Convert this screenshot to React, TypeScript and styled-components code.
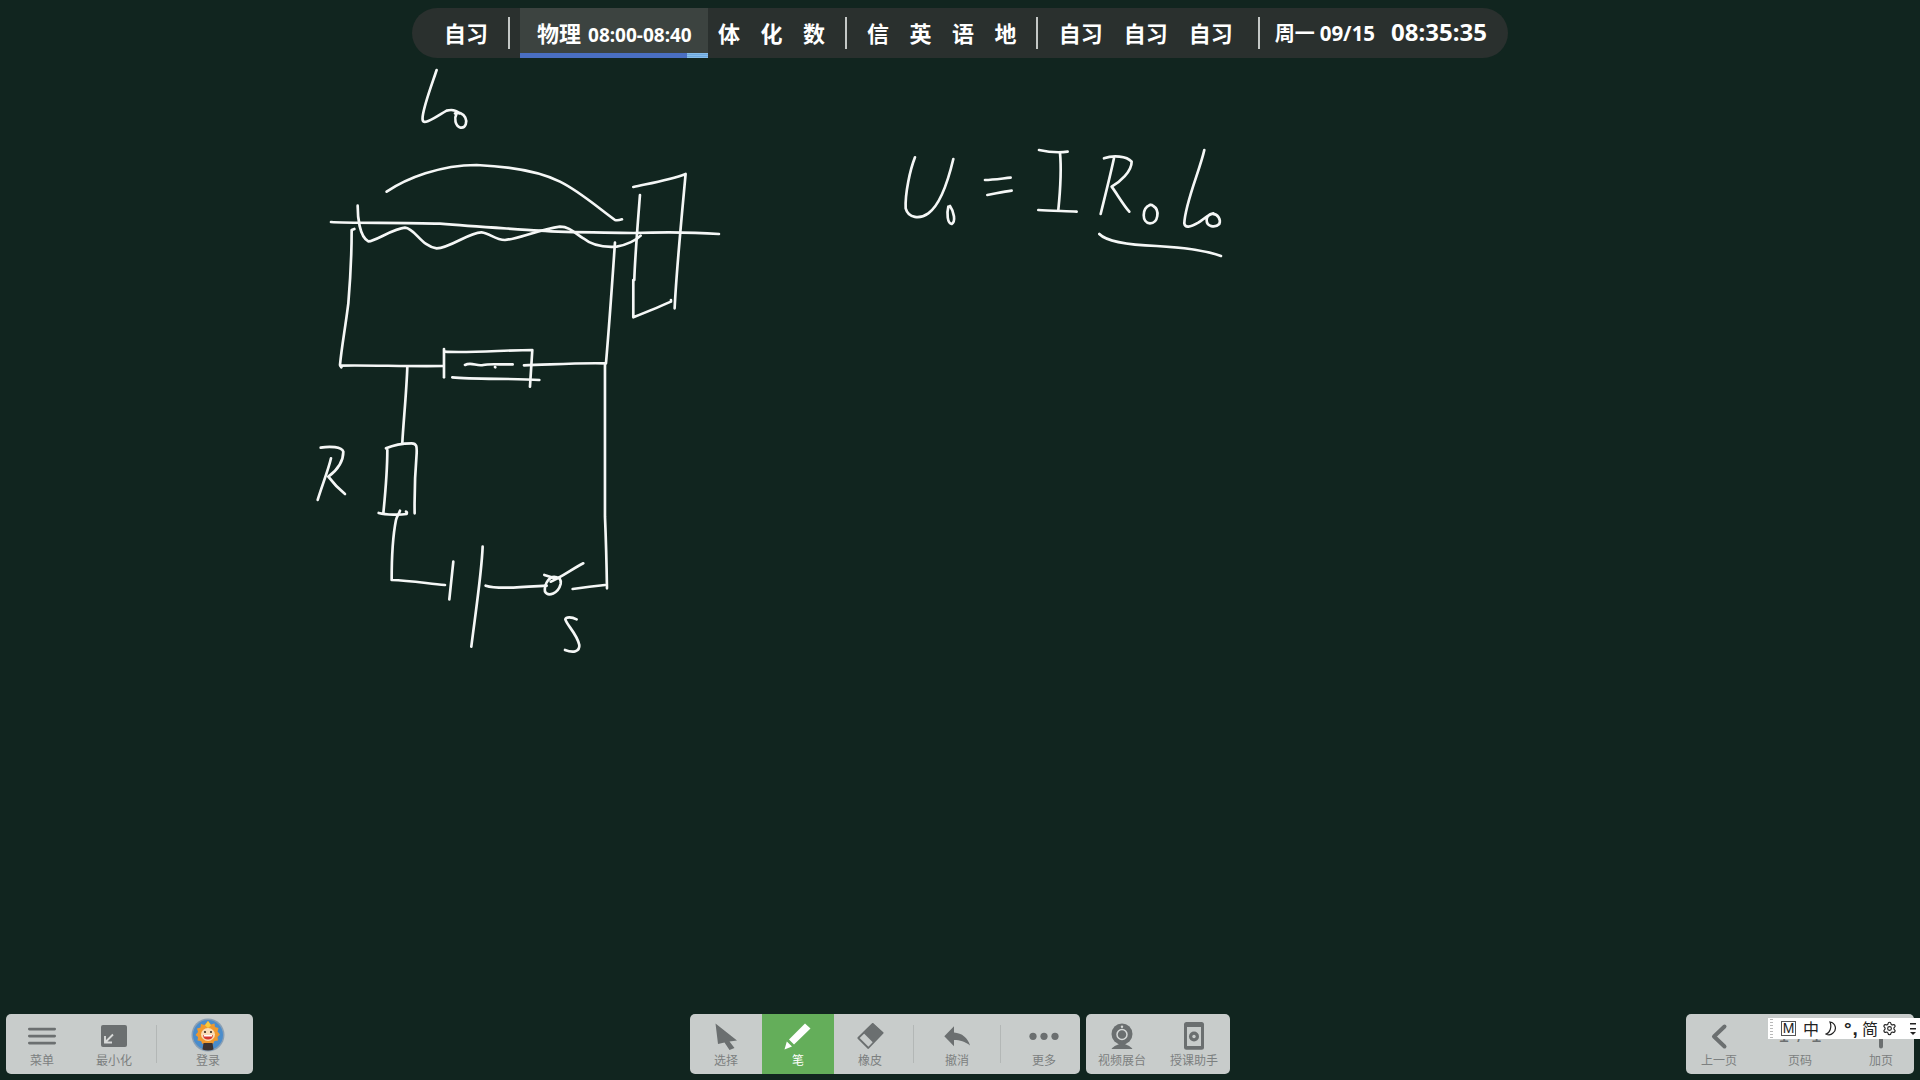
import React from "react";
import styled, { createGlobalStyle } from "styled-components";
import { Settings } from "lucide-react";

const GlobalStyle = createGlobalStyle`
  html, body {
    margin: 0;
    padding: 0;
    background: #11251f;
  }
  * {
    box-sizing: border-box;
  }
`;

const FONT = `"Noto Sans CJK SC", "Noto Sans", sans-serif`;
const ICON = "#6b6f70";

const Board = styled.div`
  position: relative;
  width: 1920px;
  height: 1080px;
  overflow: hidden;
  background: #11251f;
  font-family: ${FONT};
  display: flex;
  flex-direction: column;
  justify-content: space-between;
`;

const Ink = styled.svg`
  position: absolute;
  inset: 0;
  width: 1920px;
  height: 1080px;
`;

const InkGroup = styled.g`
  fill: none;
  stroke: #f5f7f6;
  stroke-width: 8;
  stroke-linecap: round;
  stroke-linejoin: round;
`;

const ScheduleRow = styled.div`
  position: relative;
  display: flex;
  justify-content: center;
  padding-top: 8px;
`;

const Schedule = styled.div`
  display: flex;
  align-items: stretch;
  width: 1096px;
  height: 50px;
  padding-left: 32px;
  border-radius: 25px;
  background: #2a302e;
  color: #fff;
  font-size: 22px;
  font-weight: 700;
  line-height: 48px;
  white-space: nowrap;
`;

const Group = styled.div<{ $gap: number; $left?: number }>`
  display: flex;
  gap: ${(p) => p.$gap}px;
  margin-left: ${(p) => p.$left ?? 0}px;
`;

const Divider = styled.i<{ $left: number; $right: number }>`
  align-self: center;
  width: 2px;
  height: 32px;
  margin: 0 ${(p) => p.$right}px 0 ${(p) => p.$left}px;
  background: #c4c8c6;
`;

const Current = styled.div`
  display: flex;
  flex-direction: column;
  width: 188px;
  background: #3c4340;
`;

const CurrentText = styled.div`
  flex: none;
  display: flex;
  align-items: baseline;
  gap: 7px;
  height: 45px;
  padding: 1px 0 0 17px;
  line-height: 46px;
`;

const Time = styled.span<{ $size: number; $left?: number }>`
  margin-left: ${(p) => p.$left ?? 0}px;
  font-family: "Noto Sans", sans-serif;
  font-size: ${(p) => p.$size}px;
  font-weight: 700;
`;

const Progress = styled.div`
  flex: none;
  display: flex;
  height: 5px;
`;

const ProgressDone = styled.div`
  background: #4a6fc2;
`;

const ProgressLeft = styled.div`
  flex: 1;
  background: repeating-linear-gradient(#86bdea 0 1px, #6fa8df 1px 2px);
`;

const Clock = styled.div`
  display: flex;
  align-items: baseline;
  margin-left: 15px;
`;

const Week = styled.span`
  font-size: 20px;
  margin-right: 5px;
`;

const Docks = styled.div`
  position: relative;
  display: grid;
  grid-template-columns: 1fr auto 1fr;
  padding: 0 6px 6px;
`;

const DockSet = styled.div<{ $end?: boolean }>`
  display: flex;
  gap: 6px;
  justify-self: ${(p) => (p.$end ? "end" : "start")};
`;

const Dock = styled.div<{ $gap?: number; $padRight?: number }>`
  display: flex;
  height: 60px;
  gap: ${(p) => p.$gap ?? 0}px;
  padding-right: ${(p) => p.$padRight ?? 0}px;
  border-radius: 5px;
  background: #c8cccb;
  overflow: hidden;
`;

const Tool = styled.div<{ $active?: boolean; $width?: number }>`
  display: flex;
  flex-direction: column;
  align-items: center;
  width: ${(p) => p.$width ?? 72}px;
  padding-top: 8px;
  background: ${(p) => (p.$active ? "#64ae5a" : "transparent")};
`;

const ToolIcon = styled.svg`
  display: block;
  flex: none;
  width: 40px;
  height: 30px;
  fill: ${ICON};
`;

const Avatar = styled.svg`
  display: block;
  flex: none;
  width: 34px;
  height: 34px;
  margin: -4px 0 0;
`;

const Label = styled.span<{ $active?: boolean }>`
  color: ${(p) => (p.$active ? "#fff" : "#7c8080")};
  font-size: 12px;
  line-height: 15px;
  white-space: nowrap;
`;

const Rule = styled.i<{ $left: number; $right: number }>`
  align-self: center;
  flex: none;
  width: 1px;
  height: 38px;
  margin: 0 ${(p) => p.$right}px 0 ${(p) => p.$left}px;
  background: #b3b7b6;
`;

const PageCount = styled.div`
  flex: none;
  height: 30px;
  width: 50px;
  color: ${ICON};
  font-family: "Liberation Sans", sans-serif;
  font-size: 19px;
  line-height: 27px;
  text-align: center;
  word-spacing: 3px;
`;

const Ime = styled.div`
  position: absolute;
  right: 0;
  bottom: 41px;
  display: flex;
  align-items: center;
  width: 152px;
  height: 21px;
  padding-left: 13px;
  background: #fff;
  color: #222;
  font-size: 16px;
  line-height: 21px;
`;

const Grip = styled.i`
  position: absolute;
  left: 2px;
  top: 1px;
  bottom: 1px;
  width: 3px;
  background: repeating-linear-gradient(#b9b9b9 0 1px, transparent 1px 3px);
`;

const ImeKey = styled.span`
  display: flex;
  align-items: center;
  justify-content: center;
  width: 15px;
  height: 15px;
  border: 1px solid #555;
  font-family: "Liberation Sans", sans-serif;
  font-size: 14px;
  line-height: 13px;
`;

const ImeGlyph = styled.span<{ $left: number }>`
  display: flex;
  margin-left: ${(p) => p.$left}px;
`;

const Punct = styled.span`
  font-family: "Liberation Sans", sans-serif;
  font-size: 19px;
  font-weight: 700;
  letter-spacing: 1px;
  line-height: 17px;
`;

const MoonIcon = styled.svg`
  width: 12px;
  height: 15px;
  fill: none;
  stroke: #222;
  stroke-width: 1.2;
`;

const MoreIcon = styled.svg`
  width: 8px;
  height: 14px;
  fill: #222;
`;

const z6 = [
  "M410 60C395 105 372 165 368 200C366 218 372 218 385 213C405 205 425 190 440 182C455 178 470 182 478 190",
  "M470 190C462 205 465 228 482 233C498 235 502 215 496 203C490 190 475 185 465 190",
  "M260 425C320 385 420 345 530 345C640 350 720 365 780 395C840 425 890 470 945 510C952 512 960 510 966 508",
  "M93 516C150 520 300 517 420 521C520 530 620 535 720 542C800 548 900 547 1000 549C1100 546 1200 548 1257 552",
  "M173 467C173 500 178 560 205 574C225 575 280 535 315 533C345 535 365 590 410 595C450 595 510 545 545 547C570 550 585 570 615 570C650 568 720 538 780 530C810 530 825 550 850 565C880 590 920 592 950 590C980 585 1010 570 1022 557",
  "M163 537L155 540C155 600 150 700 145 760C135 840 125 890 120 945L124 952",
  "M122 947C200 945 330 950 430 948",
  "M432 897V982",
  "M434 905C500 910 620 900 697 900L690 1010",
  "M457 982C520 988 640 985 718 990",
  "M495 945C515 935 530 950 550 945C570 940 610 945 638 943",
  "M585 951L586 952",
  "M672 946C740 945 820 938 915 940",
  "M945 578C940 650 930 800 918 940",
  "M1000 411C1050 400 1110 390 1157 372C1150 450 1130 650 1124 775",
  "M1020 435C1015 500 1005 620 1003 690",
  "M1000 690V802C1030 790 1080 770 1113 755V750",
];

const z7 = [
  "M322 80C320 150 310 250 307 308",
  "M258 325C280 315 310 310 335 310C350 310 351 320 350 340C345 400 343 460 344 520",
  "M262 330C262 400 255 470 250 520",
  "M236 519C260 525 300 525 320 522C322 518 320 515 318 515",
  "M300 512C295 525 290 530 288 540C280 580 275 650 275 720C330 722 380 730 435 735",
  "M62 323C90 318 125 320 130 335C130 370 105 395 85 410C100 430 120 450 135 462",
  "M93 355C85 390 65 440 53 480",
  "M460 665L448 778",
  "M548 620C545 700 525 830 514 920",
  "M557 737C590 748 660 742 740 737",
  "M770 712C750 705 732 730 735 755C745 772 775 760 782 732C784 718 778 712 768 712",
  "M850 670C820 685 780 715 752 725",
  "M733 705L765 715",
  "M818 747C850 742 880 738 915 735",
  "M915 75C915 200 915 400 915 530C918 600 920 680 921 745",
  "M830 838C815 830 798 830 796 838C800 855 830 880 838 915C840 935 820 940 795 930",
];

const z8 = [
  "M75 82C60 120 45 190 47 235C55 265 90 268 115 250C150 225 175 150 190 87",
  "M175 230C170 250 172 280 185 282C198 275 192 245 180 228",
  "M285 150C310 150 340 145 362 143",
  "M292 195C320 190 340 185 365 182",
  "M447 60C470 65 510 68 533 65",
  "M510 68C515 120 510 190 505 240",
  "M445 240C480 243 530 243 560 245",
  "M642 85C670 75 710 78 725 95C725 125 690 155 665 170C680 190 700 225 718 245",
  "M672 85C660 140 645 200 632 252",
  "M780 225C755 235 755 278 780 280C805 280 810 240 790 228C785 224 780 224 775 228",
  "M943 60C930 120 885 220 883 280C885 295 900 292 925 278C940 268 950 258 965 252C985 250 993 270 988 282C975 295 950 290 950 270C950 258 958 252 970 250",
  "M628 312C650 335 720 345 800 348C870 352 950 362 993 378",
];

const inkLayers = [
  { at: "translate(300 50) scale(.3333)", paths: z6 },
  { at: "translate(300 340) scale(.3333)", paths: z7 },
  { at: "translate(890 130) scale(.3333)", paths: z8 },
];

function Handwriting() {
  return (
    <Ink viewBox="0 0 1920 1080">
      {inkLayers.map((layer) => (
        <InkGroup key={layer.at} transform={layer.at}>
          {layer.paths.map((d) => (
            <path key={d} d={d} />
          ))}
        </InkGroup>
      ))}
    </Ink>
  );
}

function ClassBar() {
  return (
    <ScheduleRow>
      <Schedule>
        <span>自习</span>
        <Divider $left={20} $right={10} />
        <Current>
          <CurrentText>
            <span>物理</span>
            <Time $size={19}>08:00-08:40</Time>
          </CurrentText>
          <Progress>
            <ProgressDone style={{ width: `${(167 / 188) * 100}%` }} />
            <ProgressLeft />
          </Progress>
        </Current>
        <Group $gap={20.5} $left={10}>
          <span>体</span>
          <span>化</span>
          <span>数</span>
        </Group>
        <Divider $left={20} $right={20} />
        <Group $gap={20.5}>
          <span>信</span>
          <span>英</span>
          <span>语</span>
          <span>地</span>
        </Group>
        <Divider $left={19} $right={21} />
        <Group $gap={21}>
          <span>自习</span>
          <span>自习</span>
          <span>自习</span>
        </Group>
        <Divider $left={25} $right={0} />
        <Clock>
          <Week>周一</Week>
          <Time $size={20.5}>09/15</Time>
          <Time $size={24} $left={16}>
            08:35:35
          </Time>
        </Clock>
      </Schedule>
    </ScheduleRow>
  );
}

function LionAvatar() {
  return (
    <Avatar viewBox="0 0 34 34">
      <circle cx="17" cy="17" r="16.5" fill="#8a9fb4" />
      <circle cx="17" cy="17" r="15" fill="#4a8ccb" />
      <path
        d="M17 3l3 3.500 3.500-1 .5 3.500 3.500 1-1 3.500 2.500 3-2.500 2.500 .5 3.500-3.500 .5-1.500 3H11.500l-1.500-3-3.500-.5 .5-3.500L4.500 17l2.500-3-1-3.500 3.500-1 .5-3.500 3.500 1z"
        fill="#f0992e"
      />
      <path d="M17 3l3 4.500-3 2.500-3-2.500z" fill="#f9cb3e" />
      <ellipse cx="17" cy="16.500" rx="7" ry="6.500" fill="#f9dcb6" />
      <circle cx="14" cy="14" r="1.100" fill="#3a2a20" />
      <circle cx="20" cy="14" r="1.100" fill="#3a2a20" />
      <path d="M12 17h10c0 3-2.200 4.500-5 4.500s-5-1.500-5-4.500z" fill="#d8382e" />
      <path d="M12.800 17h8.400v1.400h-8.400z" fill="#fff" />
      <path d="M12.500 25h9l1 6.500c-3.500 1.200-7.500 1.200-11 0z" fill="#3d3230" />
    </Avatar>
  );
}

function MainDock() {
  return (
    <Dock $padRight={9}>
      <Tool>
        <ToolIcon viewBox="0 0 40 30">
          <rect x="6" y="5.700" width="28" height="2.700" rx="1.300" />
          <rect x="6" y="12.700" width="28" height="2.700" rx="1.300" />
          <rect x="6" y="19.700" width="28" height="2.700" rx="1.300" />
        </ToolIcon>
        <Label>菜单</Label>
      </Tool>
      <Tool>
        <ToolIcon viewBox="0 0 40 30">
          <rect x="7" y="3" width="26" height="22" rx="2" />
          <path
            d="M11 14v6.500h7M11.500 20L19 12.500"
            fill="none"
            stroke="#d8dad9"
            strokeWidth="1.900"
          />
        </ToolIcon>
        <Label>最小化</Label>
      </Tool>
      <Rule $left={6} $right={15} />
      <Tool>
        <LionAvatar />
        <Label>登录</Label>
      </Tool>
    </Dock>
  );
}

function DrawDock() {
  return (
    <Dock>
      <Tool>
        <ToolIcon viewBox="0 0 40 30">
          <path d="M9.500 1.500L31 18.500L23.500 19.500L28.500 26L23.500 28L18.500 20.500L12 22Z" />
        </ToolIcon>
        <Label>选择</Label>
      </Tool>
      <Tool $active>
        <ToolIcon viewBox="0 0 40 30">
          <path
            d="M27 1.500L32.500 6.500L16 22.500L11 17.500ZM8.800 19.500L14 24.500L6.500 27.500Z"
            fill="#fff"
          />
        </ToolIcon>
        <Label $active>笔</Label>
      </Tool>
      <Tool>
        <ToolIcon viewBox="0 0 40 30">
          <path
            d="M22.700 2L32.700 11L18.300 26L8.300 16Z"
            fill="none"
            stroke={ICON}
            strokeWidth="1.800"
            strokeLinejoin="round"
          />
          <path d="M22.700 1L33 11L23 20.500L13 10.500Z" />
        </ToolIcon>
        <Label>橡皮</Label>
      </Tool>
      <Rule $left={7} $right={7} />
      <Tool>
        <ToolIcon viewBox="0 0 40 30">
          <path d="M7.300 14.300L17 4.300V10.500C25 11 31 16 33 23.500C28 19.500 23 18 17 18V24.300Z" />
        </ToolIcon>
        <Label>撤消</Label>
      </Tool>
      <Rule $left={7} $right={7} />
      <Tool>
        <ToolIcon viewBox="0 0 40 30">
          <circle cx="9" cy="14.300" r="3.600" />
          <circle cx="20" cy="14.300" r="3.600" />
          <circle cx="31" cy="14.300" r="3.600" />
        </ToolIcon>
        <Label>更多</Label>
      </Tool>
    </Dock>
  );
}

function ShareDock() {
  return (
    <Dock>
      <Tool>
        <ToolIcon viewBox="0 0 40 30">
          <circle cx="20" cy="12" r="10.500" />
          <circle cx="20" cy="12.500" r="5" fill="none" stroke="#d5d8d7" strokeWidth="1.500" />
          <circle cx="20" cy="4.800" r="1.200" fill="#d5d8d7" />
          <path d="M9.500 27C12 23.500 16 23 18 21.500H22C24 23 28 23.500 30.500 27Z" />
        </ToolIcon>
        <Label>视频展台</Label>
      </Tool>
      <Tool>
        <ToolIcon viewBox="0 0 40 30">
          <rect x="10" y="0" width="20" height="27.800" rx="2.500" />
          <rect x="13" y="5" width="14" height="19" fill="#c8cccb" />
          <circle cx="20" cy="14.500" r="5" />
          <circle cx="20" cy="14.500" r="1.700" fill="#c8cccb" />
        </ToolIcon>
        <Label>授课助手</Label>
      </Tool>
    </Dock>
  );
}

function PageDock() {
  return (
    <Dock $gap={15}>
      <Tool $width={66}>
        <ToolIcon viewBox="0 0 40 30">
          <path
            d="M25.500 4.500L15 14.500L25.500 24.500"
            fill="none"
            stroke={ICON}
            strokeWidth="4"
            strokeLinecap="round"
            strokeLinejoin="round"
          />
        </ToolIcon>
        <Label>上一页</Label>
      </Tool>
      <Tool $width={66}>
        <PageCount>1 / 1</PageCount>
        <Label>页码</Label>
      </Tool>
      <Tool $width={66}>
        <ToolIcon viewBox="0 0 40 30">
          <path
            d="M20 4V24.500M9 14.500H31"
            fill="none"
            stroke={ICON}
            strokeWidth="4"
            strokeLinecap="round"
          />
        </ToolIcon>
        <Label>加页</Label>
      </Tool>
    </Dock>
  );
}

function ImeBar() {
  return (
    <Ime>
      <Grip />
      <ImeKey>M</ImeKey>
      <ImeGlyph $left={7}>中</ImeGlyph>
      <ImeGlyph $left={6}>
        <MoonIcon viewBox="0 0 12 15">
          <path d="M5 1C11 2 12 9 8 12C6 14 3 14 1 13C5 12 7 6 5 1Z" />
        </MoonIcon>
      </ImeGlyph>
      <ImeGlyph $left={7}>
        <Punct>°,</Punct>
      </ImeGlyph>
      <ImeGlyph $left={3}>简</ImeGlyph>
      <ImeGlyph $left={4}>
        <Settings size={15} strokeWidth={1.8} color="#222" />
      </ImeGlyph>
      <ImeGlyph $left={12}>
        <MoreIcon viewBox="0 0 8 14">
          <rect x="1" y="1" width="6" height="1.500" />
          <rect x="1" y="6" width="6" height="1.500" />
          <path d="M1 10H7L4 13Z" />
        </MoreIcon>
      </ImeGlyph>
    </Ime>
  );
}

export default function App() {
  return (
    <Board>
      <GlobalStyle />
      <Handwriting />
      <ClassBar />
      <Docks>
        <DockSet>
          <MainDock />
        </DockSet>
        <DockSet>
          <DrawDock />
          <ShareDock />
        </DockSet>
        <DockSet $end>
          <PageDock />
        </DockSet>
      </Docks>
      <ImeBar />
    </Board>
  );
}
